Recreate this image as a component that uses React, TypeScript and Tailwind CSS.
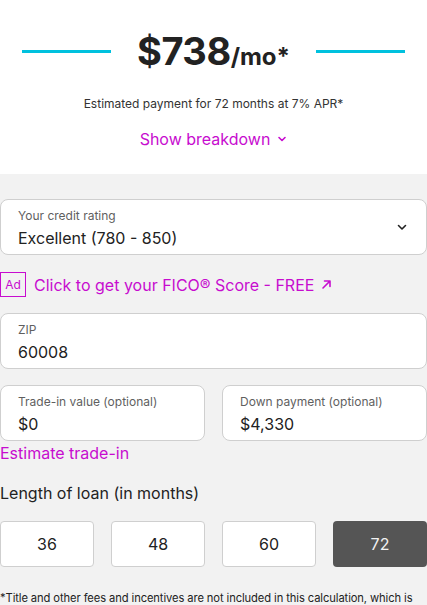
import React from "react";

function Field({ label, value, className = "" }: { label: string; value: string; className?: string }) {
  return (
    <div className={"h-[56px] rounded-[8px] border border-[#cfcfcf] bg-white px-[17px] pt-[8px] " + className}>
      <div className="text-[12px] leading-[16px] text-[#5f5f5f]">{label}</div>
      <div className="mt-[3px] text-[16px] leading-[22px] text-[#222]">{value}</div>
    </div>
  );
}

export default function App() {
  return (
    <div className="w-[427px] h-[605px] overflow-hidden bg-[#f2f2f2] text-[#222]" style={{ fontFamily: "Inter, 'Noto Sans', sans-serif" }}>
      <div className="h-[174px] bg-white flex flex-col items-center">
        <div className="mt-[27px] flex w-full items-center justify-center">
          <div className="h-[3px] w-[89px] bg-[#00c1de]" />
          <div className="mx-[26px] flex items-baseline font-bold text-[#222]">
            <span className="text-[38px] leading-[48px] tracking-[-0.5px]">$738</span>
            <span className="text-[24px] leading-[30px]">/mo*</span>
          </div>
          <div className="h-[3px] w-[89px] bg-[#00c1de]" />
        </div>
        <div className="mt-[21px] text-[12px] leading-[16px] text-[#333]">Estimated payment for 72 months at 7% APR*</div>
        <div className="mt-[16px] flex items-center gap-[7px] text-[16px] leading-[22px] text-[#c70ccf]">
          <span>Show breakdown</span>
          <svg width="10" height="10" viewBox="0 0 10 10" fill="none" stroke="#c70ccf" strokeWidth="1.6" strokeLinecap="round" strokeLinejoin="round">
            <path d="M2 3.5 L5 6.5 L8 3.5" />
          </svg>
        </div>
      </div>

      <div className="flex flex-col">
        <div className="mt-[25px] h-[56px] rounded-[8px] border border-[#cfcfcf] bg-white pl-[17px] pr-[18px] pt-[8px] flex items-start justify-between">
          <div>
            <div className="text-[12px] leading-[16px] text-[#5f5f5f]">Your credit rating</div>
            <div className="mt-[3px] text-[16px] leading-[22px] text-[#222]">Excellent (780 - 850)</div>
          </div>
          <svg className="mt-[13px]" width="12" height="12" viewBox="0 0 12 12" fill="none" stroke="#222" strokeWidth="1.6" strokeLinecap="round" strokeLinejoin="round">
            <path d="M2.5 4.5 L6 8 L9.5 4.5" />
          </svg>
        </div>

        <div className="mt-[17px] flex items-center h-[25px]">
          <div className="flex h-[25px] w-[26px] items-center justify-center border border-[#c70ccf] text-[12px] text-[#c70ccf]">Ad</div>
          <span className="ml-[8px] text-[16px] leading-[22px] text-[#c70ccf]">Click to get your FICO® Score - FREE</span>
          <svg className="ml-[7px]" width="11" height="11" viewBox="0 0 11 11" fill="none" stroke="#c70ccf" strokeWidth="1.6" strokeLinecap="round" strokeLinejoin="round">
            <path d="M2 9 L9 2 M3.5 2 H9 V7.5" />
          </svg>
        </div>

        <Field className="mt-[16px]" label="ZIP" value="60008" />

        <div className="mt-[16px] grid grid-cols-2 gap-[17px]">
          <Field label="Trade-in value (optional)" value="$0" />
          <Field label="Down payment (optional)" value="$4,330" />
        </div>
        <div className="mt-[1px] text-[16px] leading-[22px] text-[#c70ccf]">Estimate trade-in</div>

        <div className="mt-[18px] text-[16px] leading-[22px] text-[#222]">Length of loan (in months)</div>

        <div className="mt-[17px] grid grid-cols-4 gap-[17px]">
          {["36", "48", "60"].map((m) => (
            <div key={m} className="flex h-[46px] items-center justify-center rounded-[4px] border border-[#cfcfcf] bg-white text-[16px] text-[#222]">{m}</div>
          ))}
          <div className="flex h-[46px] items-center justify-center rounded-[4px] bg-[#555] text-[16px] text-[#f2f2f2]">72</div>
        </div>

        <div className="mt-[23px] text-[11.2px] tracking-[-0.1px] leading-[16px] text-[#222]">
          *Title and other fees and incentives are not included in this calculation, which is an estimate only.
        </div>
      </div>
    </div>
  );
}
